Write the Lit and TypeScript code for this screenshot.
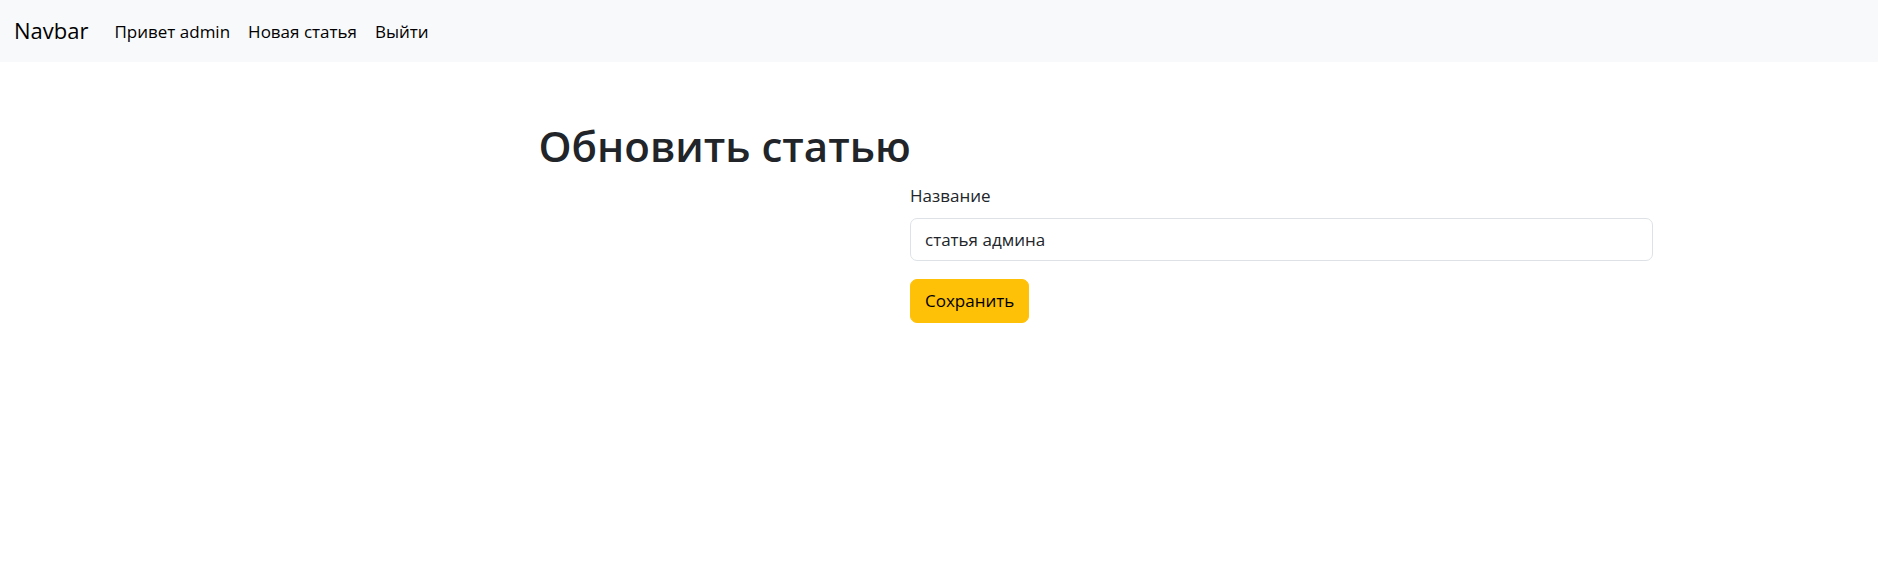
import { LitElement, html, css } from "lit";
import { customElement } from "lit/decorators.js";

@customElement("app-root")
export class AppRoot extends LitElement {
  static styles = css`
    :host {
      display: block;
      font-family: "Open Sans", "Noto Sans", sans-serif;
      font-size: 17px;
      line-height: 27px;
      color: #212529;
      background: #fff;
    }
    * { box-sizing: border-box; }
    .navbar {
      display: flex;
      align-items: center;
      padding: 9px 14px;
      background: #f8f9fa;
      color: #000;
    }
    a { color: inherit; text-decoration: none; }
    .brand { font-size: 22px; line-height: 34px; margin-right: 17px; padding: 4px 0 6px; }
    .links { display: flex; list-style: none; margin: 0; padding: 0; }
    .links a { display: block; padding: 8px 9px; }
    .container { width: 100%; max-width: 1544px; margin: 0 auto; padding: 57px 58px 0 0; }
    .title { margin: 0 0 9px; padding-left: 25%; font-size: 42px; line-height: 54px; font-weight: 600; }
    .form { margin-left: 50%; }
    label { display: block; margin-bottom: 9px; }
    .field {
      display: block; width: 100%; padding: 7px 14px; margin-bottom: 18px;
      font: inherit; color: inherit; background: #fff;
      border: 1px solid #dee2e6; border-radius: 7px;
    }
    .save {
      padding: 7px 14px; font: inherit; line-height: 28px; color: #000; background: #ffc107;
      border: 1px solid #ffc107; border-radius: 7px; cursor: pointer;
    }
  `;

  render() {
    return html`
      <nav class="navbar">
        <a class="brand" href="#">Navbar</a>
        <ul class="links">
          <li><a href="#">Привет admin</a></li>
          <li><a href="#">Новая статья</a></li>
          <li><a href="#">Выйти</a></li>
        </ul>
      </nav>
      <main class="container">
        <h1 class="title">Обновить статью</h1>
        <form class="form" @submit=${(e: Event) => e.preventDefault()}>
          <label for="title">Название</label>
          <input class="field" id="title" name="title" type="text" value="статья админа" />
          <button class="save" type="submit">Сохранить</button>
        </form>
      </main>
    `;
  }
}
